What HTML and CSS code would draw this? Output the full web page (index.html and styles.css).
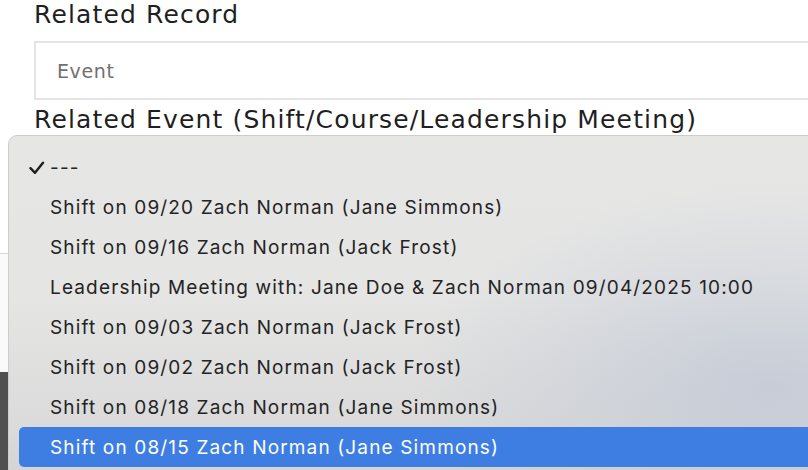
FILE: index.html
```html
<!DOCTYPE html>
<html>
<head>
<meta charset="utf-8">
<link rel="stylesheet" href="styles.css">
</head>
<body>
<div class="page">
  <div class="form">
    <label class="label">Related Record</label>
    <div class="input">Event</div>
    <label class="label label-second">Related Event (Shift/Course/Leadership Meeting)</label>
  </div>
  <div class="section"></div>
  <div class="footer"></div>
</div>

<div class="menu">
  <div class="item checked">
    <svg class="check" width="16" height="14" viewBox="0 0 16 14"><path d="M1.5 7.2 L6 11.8 L14 1.8" fill="none" stroke="#1e1e1e" stroke-width="2.4" stroke-linecap="round" stroke-linejoin="round"/></svg>
    <span>---</span>
  </div>
  <div class="item">Shift on 09/20 Zach Norman (Jane Simmons)</div>
  <div class="item">Shift on 09/16 Zach Norman (Jack Frost)</div>
  <div class="item">Leadership Meeting with: Jane Doe &amp; Zach Norman 09/04/2025 10:00</div>
  <div class="item">Shift on 09/03 Zach Norman (Jack Frost)</div>
  <div class="item">Shift on 09/02 Zach Norman (Jack Frost)</div>
  <div class="item">Shift on 08/18 Zach Norman (Jane Simmons)</div>
  <div class="item selected">Shift on 08/15 Zach Norman (Jane Simmons)</div>
</div>
</body>
</html>
```

FILE: styles.css
```css
html, body {
  margin: 0;
  padding: 0;
  width: 808px;
  height: 470px;
  overflow: hidden;
  background: #ffffff;
}

.page {
  width: 808px;
  height: 470px;
  display: flex;
  flex-direction: column;
}

.form {
  padding-top: 1px;
  padding-left: 34px;
  display: flex;
  flex-direction: column;
  font-family: "DejaVu Sans", "Open Sans", sans-serif;
}

.label {
  font-size: 25px;
  line-height: 28px;
  color: #1f1f1f;
  white-space: nowrap;
  letter-spacing: 1.15px;
}

.label-second {
  margin-top: 6px;
}

.input {
  margin-top: 12px;
  width: 1000px;
  height: 55px;
  border: 2px solid #e4e4e4;
  box-sizing: content-box;
  padding-left: 21px;
  display: flex;
  align-items: center;
  font-size: 19px;
  letter-spacing: 0.6px;
  color: #707070;
}

.section {
  margin-top: 119px;
  height: 118px;
  border-top: 1px solid #d6d6d6;
  background: #fafafa;
}

.footer {
  flex: 1;
  background: #505050;
}

.menu {
  position: absolute;
  left: 8px;
  top: 135px;
  width: 860px;
  height: 400px;
  box-sizing: border-box;
  padding: 11px 0 0 10px;
  border: 1px solid #cdcdcd;
  border-radius: 9px;
  background:
    radial-gradient(ellipse 360px 200px at 760px 250px, rgba(180, 190, 210, 0.55), rgba(180, 190, 210, 0) 100%),
    linear-gradient(to bottom, #e6e6e5 0%, #e5e5e4 40%, #dadada 75%, #c9cacb 100%);
  font-family: "Inter", "Noto Sans", sans-serif;
  font-size: 19px;
  color: #232323;
}

.item {
  height: 40px;
  display: flex;
  align-items: center;
  padding-left: 31px;
  border-radius: 5px;
  white-space: nowrap;
  letter-spacing: 1.15px;
}

.item.checked {
  position: relative;
}

.check {
  position: absolute;
  left: 10px;
  top: 14px;
}

.item.selected {
  background: #3e7ee3;
  color: #ffffff;
}
```
